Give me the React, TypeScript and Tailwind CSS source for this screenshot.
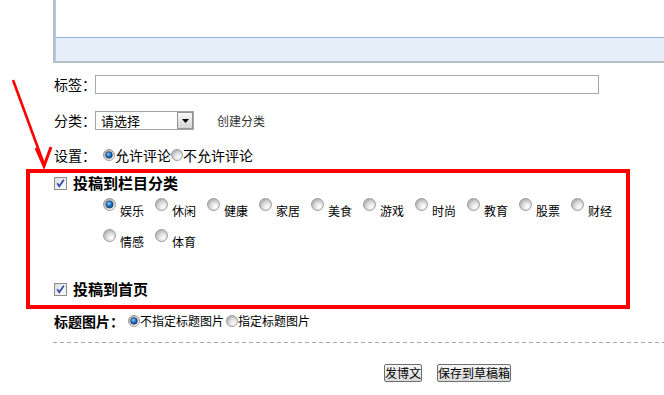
import React from "react";

function Radio({ checked = false, size = 13 }: { checked?: boolean; size?: number }) {
  const id = React.useId().replace(/:/g, "");
  return (
    <svg width={size} height={size} viewBox="0 0 13 13" className="shrink-0 block">
      <defs>
        <radialGradient id={`g${id}`} cx="65%" cy="70%" r="70%">
          <stop offset="0%" stopColor="#ffffff" />
          <stop offset="50%" stopColor="#e0e0e0" />
          <stop offset="100%" stopColor="#b0b0b0" />
        </radialGradient>
        <radialGradient id={`b${id}`} cx="40%" cy="35%" r="70%">
          <stop offset="0%" stopColor="#8fd0ff" />
          <stop offset="45%" stopColor="#1f7fd6" />
          <stop offset="100%" stopColor="#0a3a78" />
        </radialGradient>
      </defs>
      <circle cx="6.5" cy="6.5" r="6" fill={`url(#g${id})`} stroke="#9c9c9c" strokeWidth="1" />
      {checked && <circle cx="6.5" cy="6.5" r="3.6" fill={`url(#b${id})`} stroke="#2c3d5a" strokeWidth="0.8" />}
    </svg>
  );
}

function Check() {
  return (
    <svg width="13" height="13" viewBox="0 0 13 13" className="shrink-0 block">
      <defs>
        <linearGradient id="cbg" x1="0" y1="0" x2="1" y2="1">
          <stop offset="0%" stopColor="#dcdcdc" />
          <stop offset="100%" stopColor="#ffffff" />
        </linearGradient>
      </defs>
      <rect x="0.5" y="0.5" width="12" height="12" fill="url(#cbg)" stroke="#8c8c8c" />
      <path d="M3.2 6.3 L5.3 9.2 L9.8 2.8" fill="none" stroke="#2f46a8" strokeWidth="1.7" />
    </svg>
  );
}

const cats1 = ["娱乐", "休闲", "健康", "家居", "美食", "游戏", "时尚", "教育", "股票", "财经"];
const cats2 = ["情感", "体育"];

export default function App() {
  return (
    <div className="relative w-[664px] h-[395px] overflow-hidden bg-white text-black font-['Noto_Sans_CJK_SC',sans-serif]">
      {/* editor box */}
      <div className="ml-[53px] h-[63px] flex flex-col border-l-2 border-b-2 border-[#b7bec8]">
        <div className="h-[37px] bg-white border-l border-[#b3cbe8]" />
        <div className="flex-1 bg-[#e6eef9] border-t border-[#8fb3de] border-l border-l-[#b3cbe8]" />
      </div>

      {/* tags */}
      <div className="mt-[12px] pl-[54px] h-[19px] flex items-center">
        <span className="w-[41px] shrink-0 whitespace-nowrap text-[14px] leading-[19px]">标签：</span>
        <input readOnly className="w-[504px] shrink-0 h-[19px] border border-[#a9a9a9] bg-white outline-none" />
      </div>

      {/* category */}
      <div className="mt-[17px] pl-[54px] h-[19px] flex items-center">
        <span className="w-[41px] shrink-0 whitespace-nowrap text-[14px] leading-[19px]">分类：</span>
        <div className="w-[99px] shrink-0 h-[19px] border border-[#a5a5a5] flex items-stretch bg-white">
          <span className="flex-1 pl-[5px] text-[13px] leading-[17px] whitespace-nowrap">请选择</span>
          <span className="w-[16px] border border-[#959595] bg-gradient-to-b from-[#f7f7f7] to-[#d6d6d6] flex items-center justify-center">
            <svg width="7" height="4" viewBox="0 0 7 4" className="block">
              <polygon points="0,0 7,0 3.5,4" fill="#000" />
            </svg>
          </span>
        </div>
        <span className="ml-[23px] whitespace-nowrap text-[12px] leading-[19px] text-[#333]">创建分类</span>
      </div>

      {/* settings */}
      <div className="mt-[15px] pl-[54px] h-[20px] flex items-center whitespace-nowrap">
        <span className="w-[49px] shrink-0 text-[14px] leading-[20px]">设置：</span>
        <Radio checked size={12} />
        <span className="text-[14px] leading-[20px]">允许评论</span>
        <Radio size={12} />
        <span className="text-[14px] leading-[20px]">不允许评论</span>
      </div>

      {/* red highlight box */}
      <div className="mt-[4px] ml-[26px] w-[604px] border-4 border-[#ff0000] pb-[6px]">
        <div className="h-[20px] pl-[24px] flex items-center">
          <Check />
          <span className="ml-[6px] text-[15px] leading-[20px] font-bold whitespace-nowrap">投稿到栏目分类</span>
        </div>
        <div className="mt-[5px] pl-[73px] grid grid-cols-[repeat(10,52px)] gap-y-[11px]">
          {[...cats1, ...cats2].map((c, i) => (
            <div key={c} className="flex items-start h-[20px]">
              <Radio checked={i === 0} />
              <span className="ml-[4px] mt-[6px] text-[12px] leading-[14px] whitespace-nowrap">{c}</span>
            </div>
          ))}
        </div>
        <div className="mt-[30px] h-[20px] pl-[24px] flex items-center">
          <Check />
          <span className="ml-[6px] text-[15px] leading-[20px] font-bold whitespace-nowrap">投稿到首页</span>
        </div>
      </div>

      {/* title image */}
      <div className="mt-[2px] pl-[54px] h-[20px] flex items-center whitespace-nowrap">
        <span className="w-[74px] shrink-0 text-[14px] leading-[20px] font-bold">标题图片：</span>
        <Radio checked size={12} />
        <span className="text-[12px] leading-[20px]">不指定标题图片</span>
        <span className="ml-[2px]" />
        <Radio size={12} />
        <span className="text-[12px] leading-[20px]">指定标题图片</span>
      </div>

      {/* dashed separator */}
      <div className="mt-[11px] ml-[53px] h-px bg-[repeating-linear-gradient(90deg,#a8a8a8_0_4px,transparent_4px_7px)]" />

      {/* buttons */}
      <div className="mt-[21px] ml-[384px] flex gap-[15px]">
        <button className="h-[18px] px-0 border border-[#707070] rounded-[2px] bg-gradient-to-b from-[#f7f7f7] to-[#dadada] text-[12px] leading-[16px] whitespace-nowrap">
          发博文
        </button>
        <button className="h-[18px] px-0 border border-[#707070] rounded-[2px] bg-gradient-to-b from-[#f7f7f7] to-[#dadada] text-[12px] leading-[16px] whitespace-nowrap">
          保存到草稿箱
        </button>
      </div>

      {/* annotation arrow */}
      <svg className="absolute left-0 top-0" width="70" height="180" viewBox="0 0 70 180">
        <line x1="13" y1="80" x2="43.5" y2="163" stroke="#ff0000" strokeWidth="2.6" />
        <polyline points="36,148 44,166 51,147" fill="none" stroke="#ff0000" strokeWidth="3" strokeLinejoin="miter" />
      </svg>
    </div>
  );
}
